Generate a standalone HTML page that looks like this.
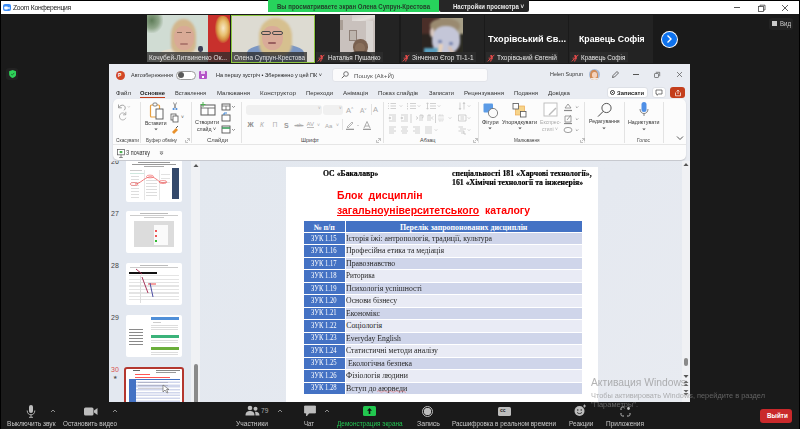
<!DOCTYPE html>
<html><head><meta charset="utf-8">
<style>
*{margin:0;padding:0;box-sizing:border-box}
html,body{width:800px;height:429px;overflow:hidden;background:#1a1a1a;font-family:"Liberation Sans",sans-serif}
.a{position:absolute}
.t{position:absolute;white-space:nowrap;line-height:1}
</style></head><body>
<!-- outer frame -->
<div class="a" style="left:0;top:0;width:800px;height:429px;background:#1a1a1a"></div>
<div class="a" style="left:0;top:0;width:800px;height:1px;background:#000"></div>
<div class="a" style="left:0;top:0;width:1px;height:429px;background:#000"></div>
<div class="a" style="left:799px;top:0;width:1px;height:429px;background:#000"></div>

<!-- title bar -->
<div class="a" style="left:1px;top:1px;width:798px;height:13px;background:#fff"></div>
<div class="a" style="left:3px;top:4px;width:7.5px;height:7px;background:#3b8cf6;border-radius:2px"></div>
<svg class="a" style="left:4px;top:5.5px" width="6" height="4" viewBox="0 0 6 4"><rect x="0.3" y="0.6" width="3.6" height="2.8" rx="0.7" fill="#fff"/><path d="M4 1.5 L5.6 0.7 V3.3 L4 2.5Z" fill="#fff"/></svg>
<div class="t" style="left:13px;top:4px;font-size:7px;letter-spacing:-0.3px;color:#222;transform:scaleX(0.968);transform-origin:0 0">Zoom Конференция</div>
<!-- window controls -->
<div class="a" style="left:733.5px;top:7px;width:6px;height:0.8px;background:#555"></div>
<svg class="a" style="left:757px;top:4px" width="9" height="9" viewBox="0 0 9 9" stroke="#444" stroke-width="0.8" fill="none"><rect x="1.5" y="2.5" width="5" height="5"/><path d="M3 2.5 V1.2 H8 V6 H6.5"/></svg>
<svg class="a" style="left:781px;top:3.5px" width="8" height="8" viewBox="0 0 8 8"><path d="M1 1 L7 7 M7 1 L1 7" stroke="#333" stroke-width="0.8"/></svg>

<!-- green banner -->
<div class="a" style="left:268px;top:0;width:171px;height:12px;background:#27d35c"></div>
<div class="t" style="left:277px;top:3.8px;font-size:6.8px;font-weight:bold;color:#23402a;transform:scaleX(0.891);transform-origin:0 0">Вы просматриваете экран Олена Супрун-Крестова</div>
<div class="a" style="left:439px;top:0;width:90px;height:12px;background:#262626;border-radius:0 0 2px 2px"></div>
<div class="t" style="left:453px;top:3.8px;font-size:6.6px;font-weight:bold;color:#e8e8e8;transform:scaleX(0.916);transform-origin:0 0">Настройки просмотра ˅</div>

<!-- view button -->
<div class="a" style="left:769px;top:18px;width:24px;height:12px;background:#222;border-radius:3px"></div>
<div class="a" style="left:772px;top:21px;width:5px;height:5px;background:#ccc"></div>
<div class="t" style="left:780px;top:21px;font-size:6.5px;color:#ccc;transform:scaleX(0.935);transform-origin:0 0">Вид</div>

<!-- shield -->
<div class="a" style="left:6px;top:68px;width:12px;height:12px;background:#222;border-radius:3px"></div>
<svg class="a" style="left:8.6px;top:70.4px" width="7.4" height="8" viewBox="0 0 8 9"><path d="M4 0 L8 1.5 V4.5 C8 7 6 8.3 4 9 C2 8.3 0 7 0 4.5 V1.5Z" fill="#2fd35a"/><path d="M2.3 4.6 L3.5 5.8 L5.8 3.2" stroke="#1a5a2a" stroke-width="0.9" fill="none"/></svg>

<!-- VIDEO TILES -->

<!-- tile 1 -->
<div class="a" style="left:146.5px;top:15px;width:83.5px;height:47px;background:#d0dcd3;overflow:hidden">
<div class="a" style="left:0;top:0;width:84px;height:47px;filter:blur(0.6px)">
  <div class="a" style="left:0;top:0;width:16px;height:18px;background:radial-gradient(ellipse at 30% 30%,#5e7c58 0,#8fa68a 45%,rgba(208,220,211,0) 75%)"></div>
  <div class="a" style="left:61px;top:0;width:23px;height:48px;background:#c8302c"></div>
  <div class="a" style="left:68px;top:1px;width:15px;height:27px;border-radius:40%;background:radial-gradient(ellipse at 55% 45%,#f7e8c8 0,#e8c070 35%,#d49040 55%,rgba(200,48,44,0) 75%)"></div>
  <div class="a" style="left:12px;top:33px;width:46px;height:16px;border-radius:45% 45% 0 0;background:#e3ddcc"></div>
  <div class="a" style="left:51px;top:31px;width:5px;height:6px;border-radius:40%;background:#3a3f55"></div>
  <div class="a" style="left:24.5px;top:4px;width:25px;height:34px;border-radius:48% 48% 25% 25%;background:#d2b68d;filter:blur(0.8px)"></div>
  <div class="a" style="left:27px;top:11px;width:20px;height:24px;border-radius:45% 45% 48% 48%;background:#d9aa96"></div>
  <div class="a" style="left:30px;top:17px;width:5px;height:1.2px;background:#8a6a5a"></div>
  <div class="a" style="left:39px;top:17px;width:5px;height:1.2px;background:#8a6a5a"></div>
  <div class="a" style="left:33px;top:28px;width:8px;height:1.5px;border-radius:1px;background:#b07a70"></div>
</div>
  <div class="a" style="left:0;top:37px;width:84px;height:10px;background:rgba(45,45,45,.78)"></div>
  <div class="t" style="left:2px;top:40px;font-size:6.4px;color:#e2e2e2;transform:scaleX(1.024);transform-origin:0 0">Кочубей-Литвиненко Ок...</div>
</div>
<!-- tile 2 -->
<div class="a" style="left:231px;top:15px;width:84px;height:48px;background:#8cc63f"></div>
<div class="a" style="left:232px;top:16px;width:82px;height:46px;background:#dddbd2;overflow:hidden">
<div class="a" style="left:0;top:0;width:82px;height:46px;filter:blur(0.6px)">
  <div class="a" style="left:15px;top:28px;width:57px;height:20px;border-radius:45% 45% 0 0;background:#7b97c4"></div>
  <div class="a" style="left:27px;top:1.5px;width:33px;height:38px;border-radius:48% 48% 30% 30%;background:#d6c08f;filter:blur(0.8px)"></div>
  <div class="a" style="left:30px;top:10px;width:21px;height:24px;border-radius:45% 45% 48% 48%;background:#d9ab98"></div>
  <div class="a" style="left:29px;top:14.5px;width:10px;height:4.5px;border:1.2px solid #4a4a4a;border-radius:2px"></div>
  <div class="a" style="left:40px;top:14.5px;width:11px;height:4.5px;border:1.2px solid #4a4a4a;border-radius:2px"></div>
  <div class="a" style="left:36px;top:26px;width:8px;height:2px;border-radius:1px;background:#9a6060"></div>
</div>
  <div class="a" style="left:0;top:36px;width:75px;height:10px;background:rgba(45,45,45,.78)"></div>
  <div class="t" style="left:2px;top:39px;font-size:6.4px;color:#e2e2e2;transform:scaleX(0.987);transform-origin:0 0">Олена Супрун-Крестова</div>
</div>
<!-- tile 3 -->
<div class="a" style="left:316px;top:15px;width:83px;height:48px;background:#232323"></div>
<div class="a" style="left:340px;top:15px;width:35px;height:47px;background:#c9c1bd;overflow:hidden;filter:blur(0.5px)">
  <div class="a" style="left:26px;top:0;width:7px;height:48px;background:#d9d5d2"></div>
  <div class="a" style="left:12px;top:0;width:23px;height:6px;background:linear-gradient(160deg,#d0cbc8 0,#e4e0dc 60%,#c9c1bd 100%)"></div>
  <div class="a" style="left:8.5px;top:15px;width:8px;height:10.5px;border:1px solid #8e8078;background:#bdb5ae"></div>
  <div class="a" style="left:0;top:5px;width:3px;height:10px;background:#a99e96"></div>
  <div class="a" style="left:12.5px;top:24px;width:15px;height:16px;border-radius:48%;background:#7a6150"></div>
  <div class="a" style="left:14.5px;top:28px;width:10px;height:10px;border-radius:48%;background:#8a705c"></div>
  <div class="a" style="left:9px;top:36px;width:23px;height:12px;border-radius:40% 40% 0 0;background:#4d3f36"></div>
</div>
<div class="a" style="left:316px;top:52.25px;width:67px;height:9.5px;background:rgba(45,45,45,.85)"></div>
<svg class="a" style="left:317px;top:53.5px" width="8" height="8" viewBox="0 0 8 8"><path d="M3.2 1.2 C4.2 0.6 5.4 1 5.6 2.2 L5.8 4.2 C5.8 5.2 5 5.8 4.2 5.7" fill="#e24a4a"/><path d="M2.2 3.5 C2 5.4 3 6.3 4.3 6.4 M4.2 6.4 L3.6 7.6" stroke="#e24a4a" stroke-width="0.9" fill="none"/><path d="M0.8 7.4 L7.4 0.8" stroke="#e24a4a" stroke-width="1"/></svg>
<div class="t" style="left:328px;top:54.5px;font-size:6.4px;color:#e6e6e6;transform:scaleX(0.990);transform-origin:0 0">Наталья Пушанко</div>
<!-- tile 4 -->
<div class="a" style="left:401px;top:15px;width:83px;height:48px;background:#232323"></div>
<div class="a" style="left:422px;top:18px;width:41px;height:34px;background:#2a2420;overflow:hidden">
  <div class="a" style="left:-4px;top:-4px;width:50px;height:42px;filter:blur(1.2px)">
  <div class="a" style="left:0;top:0;width:22px;height:20px;background:#4a2e28"></div>
  <div class="a" style="left:22px;top:0;width:28px;height:22px;background:#a8a088"></div>
  <div class="a" style="left:12px;top:4px;width:30px;height:16px;border-radius:50%;background:#9a8a70"></div>
  <div class="a" style="left:14px;top:12px;width:28px;height:28px;border-radius:45%;background:#c4c6d8"></div>
  <div class="a" style="left:12px;top:14px;width:4px;height:9px;border-radius:50%;background:#d8c8c0"></div>
  <div class="a" style="left:20px;top:26px;width:4px;height:3px;border-radius:50%;background:#6a7aa8"></div>
  <div class="a" style="left:31px;top:28px;width:4px;height:3px;border-radius:50%;background:#6a7aa8"></div>
  <div class="a" style="left:6px;top:34px;width:14px;height:8px;background:#5aa0c0"></div>
  <div class="a" style="left:20px;top:30px;width:4px;height:12px;background:#e8d0b8;transform:rotate(12deg)"></div>
  <div class="a" style="left:32px;top:32px;width:3px;height:10px;background:#d8c0b0;transform:rotate(-30deg)"></div>
  <div class="a" style="left:42px;top:20px;width:8px;height:22px;background:#2a2a22"></div>
  </div>
</div>
<div class="a" style="left:401px;top:52.25px;width:75px;height:9.5px;background:rgba(45,45,45,.85)"></div>
<svg class="a" style="left:402px;top:53.5px" width="8" height="8" viewBox="0 0 8 8"><path d="M3.2 1.2 C4.2 0.6 5.4 1 5.6 2.2 L5.8 4.2 C5.8 5.2 5 5.8 4.2 5.7" fill="#e24a4a"/><path d="M2.2 3.5 C2 5.4 3 6.3 4.3 6.4 M4.2 6.4 L3.6 7.6" stroke="#e24a4a" stroke-width="0.9" fill="none"/><path d="M0.8 7.4 L7.4 0.8" stroke="#e24a4a" stroke-width="1"/></svg>
<div class="t" style="left:412px;top:54.5px;font-size:6.4px;color:#e6e6e6;transform:scaleX(1.023);transform-origin:0 0">Зінченко Єгор ТІ-1-1</div>
<!-- tile 5 -->
<div class="a" style="left:485px;top:15px;width:83px;height:48px;background:#232323"></div>
<div class="t" style="left:488px;top:35px;font-size:9.1px;font-weight:bold;color:#fff;transform:scaleX(1.005);transform-origin:0 0">Тхорівський Єв...</div>
<div class="a" style="left:486px;top:52.25px;width:72px;height:9.5px;background:#2b2b2b"></div>
<svg class="a" style="left:487px;top:53.5px" width="8" height="8" viewBox="0 0 8 8"><path d="M3.2 1.2 C4.2 0.6 5.4 1 5.6 2.2 L5.8 4.2 C5.8 5.2 5 5.8 4.2 5.7" fill="#e24a4a"/><path d="M2.2 3.5 C2 5.4 3 6.3 4.3 6.4 M4.2 6.4 L3.6 7.6" stroke="#e24a4a" stroke-width="0.9" fill="none"/><path d="M0.8 7.4 L7.4 0.8" stroke="#e24a4a" stroke-width="1"/></svg>
<div class="t" style="left:497px;top:54.5px;font-size:6.4px;color:#e6e6e6;transform:scaleX(1.015);transform-origin:0 0">Тхорівський Євгеній</div>
<!-- tile 6 -->
<div class="a" style="left:569px;top:15px;width:84px;height:48px;background:#232323"></div>
<div class="t" style="left:579px;top:35px;font-size:8.8px;font-weight:bold;color:#fff;transform:scaleX(0.994);transform-origin:0 0">Кравець Софія</div>
<div class="a" style="left:570px;top:52.25px;width:58px;height:9.5px;background:#2b2b2b"></div>
<svg class="a" style="left:571px;top:53.5px" width="8" height="8" viewBox="0 0 8 8"><path d="M3.2 1.2 C4.2 0.6 5.4 1 5.6 2.2 L5.8 4.2 C5.8 5.2 5 5.8 4.2 5.7" fill="#e24a4a"/><path d="M2.2 3.5 C2 5.4 3 6.3 4.3 6.4 M4.2 6.4 L3.6 7.6" stroke="#e24a4a" stroke-width="0.9" fill="none"/><path d="M0.8 7.4 L7.4 0.8" stroke="#e24a4a" stroke-width="1"/></svg>
<div class="t" style="left:581px;top:54.5px;font-size:6.4px;color:#e6e6e6;transform:scaleX(0.991);transform-origin:0 0">Кравець Софія</div>
<!-- next arrow -->
<div class="a" style="left:660.5px;top:30.5px;width:17px;height:17px;border-radius:50%;background:#fff"></div>
<div class="a" style="left:661.5px;top:31.5px;width:15px;height:15px;border-radius:50%;background:#0e72ed"></div>
<svg class="a" style="left:665px;top:34px" width="8" height="10" viewBox="0 0 8 10"><path d="M2.5 1.5 L6 5 L2.5 8.5" stroke="#fff" stroke-width="1.4" fill="none"/></svg>


<!-- PPT WINDOW -->

<div class="a" style="left:109px;top:64px;width:581px;height:338px;background:#e9ecf2;overflow:hidden">
</div>
<!-- PPT title bar -->
<div class="a" style="left:116px;top:71px;width:9px;height:9px;border-radius:50%;background:#d24726"></div>
<div class="t" style="left:118px;top:73px;font-size:5px;font-weight:bold;color:#fff">P</div>
<div class="t" style="left:131px;top:72.7px;font-size:5.5px;color:#333;transform:scaleX(0.991);transform-origin:0 0">Автозбереження</div>
<div class="a" style="left:176px;top:70.5px;width:19.5px;height:9.5px;border-radius:5px;border:0.8px solid #9a9a9a;background:#fff"></div>
<div class="a" style="left:178px;top:72.2px;width:6px;height:6px;border-radius:50%;background:#5a5a5a"></div>
<div class="a" style="left:199px;top:71px;width:8px;height:8px;border-radius:1px;background:#b455c8"></div>
<div class="a" style="left:201px;top:71px;width:4px;height:3px;background:#e9c8ef"></div>
<div class="a" style="left:202px;top:76px;width:2px;height:2px;background:#fff"></div>
<div class="t" style="left:216px;top:73px;font-size:5.6px;color:#222;transform:scaleX(0.986);transform-origin:0 0">На першу зустріч • Збережено у цей ПК ˅</div>
<div class="a" style="left:332px;top:68px;width:156px;height:14px;border-radius:3px;background:#fbfbfc;border:1px solid #e2e4ea"></div>
<svg class="a" style="left:341px;top:71px" width="8" height="8" viewBox="0 0 8 8"><circle cx="5" cy="3" r="2.3" stroke="#555" stroke-width="0.8" fill="none"/><path d="M3.3 4.7 L0.8 7.2" stroke="#555" stroke-width="0.9"/></svg>
<div class="t" style="left:354px;top:72.8px;font-size:6.2px;color:#555;transform:scaleX(1.005);transform-origin:0 0">Пошук (Alt+Й)</div>
<div class="t" style="left:550px;top:72px;font-size:5.5px;color:#333;transform:scaleX(0.981);transform-origin:0 0">Helen Suprun</div>
<div class="a" style="left:588.5px;top:69px;width:11px;height:11px;border-radius:50%;background:#a9bcd8;overflow:hidden">
<div class="a" style="left:1.5px;top:0.5px;width:8px;height:11px;border-radius:45% 45% 30% 30%;background:#d08c58"></div>
<div class="a" style="left:3px;top:3px;width:5px;height:6px;border-radius:45%;background:#f4d2bc"></div>
<div class="a" style="left:1px;top:9px;width:9px;height:3px;background:#f2e8e0"></div></div>
<svg class="a" style="left:611px;top:70px" width="9" height="9" viewBox="0 0 9 9"><path d="M1.5 7.5 L2 5.5 L6 1.5 L7.5 3 L3.5 7 Z" stroke="#444" stroke-width="0.8" fill="none"/></svg>
<div class="a" style="left:633px;top:73.9px;width:5.5px;height:0.7px;background:#555"></div>
<svg class="a" style="left:653px;top:71px" width="8" height="8" viewBox="0 0 8 8" stroke="#555" stroke-width="0.7" fill="none"><rect x="1.5" y="2.5" width="4" height="4" rx="0.6"/><path d="M2.8 1.3 H6.7 V5.2"/></svg>
<svg class="a" style="left:675.5px;top:71px" width="7" height="7" viewBox="0 0 7 7"><path d="M1 1 L6 6 M6 1 L1 6" stroke="#555" stroke-width="0.7"/></svg>
<!-- tabs -->
<div class="t" style="left:116px;top:91px;font-size:5.9px;color:#333;transform:scaleX(1.036);transform-origin:0 0">Файл</div>
<div class="t" style="left:140px;top:91px;font-size:5.8px;font-weight:bold;color:#222;transform:scaleX(0.997);transform-origin:0 0">Основне</div>
<div class="a" style="left:140px;top:96.5px;width:25px;height:1.2px;background:#c43e1c"></div>
<div class="t" style="left:175px;top:91px;font-size:5.9px;color:#333;transform:scaleX(0.963);transform-origin:0 0">Вставлення</div>
<div class="t" style="left:217px;top:91px;font-size:5.9px;color:#333;transform:scaleX(1.027);transform-origin:0 0">Малювання</div>
<div class="t" style="left:260px;top:91px;font-size:5.9px;color:#333;transform:scaleX(1.072);transform-origin:0 0">Конструктор</div>
<div class="t" style="left:306px;top:91px;font-size:5.9px;color:#333;transform:scaleX(1.012);transform-origin:0 0">Переходи</div>
<div class="t" style="left:343px;top:91px;font-size:5.9px;color:#333;transform:scaleX(1.055);transform-origin:0 0">Анімація</div>
<div class="t" style="left:378px;top:91px;font-size:5.9px;color:#333;transform:scaleX(1.036);transform-origin:0 0">Показ слайдів</div>
<div class="t" style="left:429px;top:91px;font-size:5.9px;color:#333;transform:scaleX(0.984);transform-origin:0 0">Записати</div>
<div class="t" style="left:464px;top:91px;font-size:5.9px;color:#333;transform:scaleX(1.041);transform-origin:0 0">Рецензування</div>
<div class="t" style="left:514px;top:91px;font-size:5.9px;color:#333;transform:scaleX(1.009);transform-origin:0 0">Подання</div>
<div class="t" style="left:548px;top:91px;font-size:5.9px;color:#333;transform:scaleX(1.038);transform-origin:0 0">Довідка</div>
<div class="a" style="left:607px;top:87px;width:41px;height:11px;border-radius:3px;background:#fff;border:1px solid #dde0e6"></div>
<div class="a" style="left:610px;top:90px;width:5px;height:5px;border-radius:50%;border:1px solid #333;background:radial-gradient(circle,#333 40%,#fff 45%)"></div>
<div class="t" style="left:617px;top:91px;font-size:5.8px;font-weight:bold;color:#222;transform:scaleX(1.006);transform-origin:0 0">Записати</div>
<div class="a" style="left:652px;top:87px;width:14px;height:11px;border-radius:3px;background:#fff;border:1px solid #dde0e6"></div>
<svg class="a" style="left:655px;top:89px" width="8" height="7" viewBox="0 0 8 7"><path d="M1 1 H7 V5 H3.5 L2 6.3 V5 H1 Z" stroke="#444" stroke-width="0.7" fill="none"/></svg>
<div class="a" style="left:670px;top:87px;width:15px;height:11px;border-radius:3px;background:#c43e1c"></div>
<svg class="a" style="left:673.5px;top:88.5px" width="8" height="8" viewBox="0 0 8 8" stroke="#fff" stroke-width="0.7" fill="none"><path d="M1.5 3.5 V6.8 H6.5 V3.5"/><path d="M4 5 V1.2 M2.6 2.5 L4 1.1 L5.4 2.5"/></svg>

<!-- ribbon -->
<div class="a" style="left:113px;top:99px;width:573px;height:61px;border-radius:5px;background:#fcfcfc;box-shadow:0 1px 1.5px rgba(0,0,0,.18)"></div>
<div class="a" style="left:113px;top:144px;width:573px;height:1px;background:#e6e6e6"></div>

<!-- separators -->
<div class="a" style="left:140px;top:102px;width:1px;height:41px;background:#e3e3e3"></div>
<div class="a" style="left:191px;top:102px;width:1px;height:41px;background:#e3e3e3"></div>
<div class="a" style="left:241px;top:102px;width:1px;height:41px;background:#e3e3e3"></div>
<div class="a" style="left:383px;top:102px;width:1px;height:41px;background:#e3e3e3"></div>
<div class="a" style="left:478px;top:102px;width:1px;height:41px;background:#e3e3e3"></div>
<div class="a" style="left:584px;top:102px;width:1px;height:41px;background:#e3e3e3"></div>
<div class="a" style="left:624px;top:102px;width:1px;height:41px;background:#e3e3e3"></div>
<div class="a" style="left:663px;top:102px;width:1px;height:41px;background:#e3e3e3"></div>
<!-- group labels -->
<div class="t" style="left:116px;top:138px;font-size:5.5px;color:#444;transform:scaleX(0.869);transform-origin:0 0">Скасувати</div>
<div class="t" style="left:146px;top:138px;font-size:5.5px;color:#444;transform:scaleX(0.880);transform-origin:0 0">Буфер обміну</div>
<div class="t" style="left:207px;top:138px;font-size:5.5px;color:#444;transform:scaleX(1.072);transform-origin:0 0">Слайди</div>
<div class="t" style="left:301px;top:138px;font-size:5.5px;color:#444">Шрифт</div>
<div class="t" style="left:420px;top:138px;font-size:5.5px;color:#444">Абзац</div>
<div class="t" style="left:514px;top:138px;font-size:5.5px;color:#444;transform:scaleX(0.850);transform-origin:0 0">Малювання</div>
<div class="t" style="left:637px;top:138px;font-size:5.5px;color:#444;transform:scaleX(0.888);transform-origin:0 0">Голос</div>
<!-- launchers -->
<svg class="a" style="left:185px;top:137.5px" width="5" height="5" viewBox="0 0 5 5" stroke="#999" stroke-width="0.6" fill="none"><path d="M0.5 2 V4.5 H3 M2 0.5 H4.5 V3 M1.8 3.2 L4.2 0.8"/></svg>
<svg class="a" style="left:376px;top:137.5px" width="5" height="5" viewBox="0 0 5 5" stroke="#999" stroke-width="0.6" fill="none"><path d="M0.5 2 V4.5 H3 M2 0.5 H4.5 V3 M1.8 3.2 L4.2 0.8"/></svg>
<svg class="a" style="left:473px;top:137.5px" width="5" height="5" viewBox="0 0 5 5" stroke="#999" stroke-width="0.6" fill="none"><path d="M0.5 2 V4.5 H3 M2 0.5 H4.5 V3 M1.8 3.2 L4.2 0.8"/></svg>
<svg class="a" style="left:580px;top:137.5px" width="5" height="5" viewBox="0 0 5 5" stroke="#999" stroke-width="0.6" fill="none"><path d="M0.5 2 V4.5 H3 M2 0.5 H4.5 V3 M1.8 3.2 L4.2 0.8"/></svg>
<!-- undo/redo -->
<svg class="a" style="left:116px;top:102px" width="16" height="20" viewBox="0 0 16 20" fill="none" stroke="#8a8a8a" stroke-width="0.8"><path d="M2.5 2.5 V5.8 H5.8"/><path d="M2.7 5.6 C4 3.4 6 2.8 7.6 3.4 C9.6 4.2 9.8 7.2 7.8 8.4"/><path d="M11.8 4.3 L12.8 5.3 L13.8 4.3" stroke="#aaa" stroke-width="0.6"/><path d="M9.6 12.6 C8.8 11 7 10.6 5.4 11.2 C3.4 12 2.8 15 4.2 16.8 C5.8 18.6 9 18.2 9.8 15.8" stroke="#a0a0a0"/><path d="M9.8 9.8 V12.8 H7" stroke="#a0a0a0"/></svg>
<!-- paste -->
<svg class="a" style="left:149px;top:101.5px" width="16" height="18" viewBox="0 0 16 18"><rect x="1.5" y="3" width="9" height="12" rx="1" fill="#fff" stroke="#e8a040" stroke-width="1.2"/><rect x="4" y="1" width="4" height="3" rx="1" fill="#fff" stroke="#666" stroke-width="0.8"/><rect x="7" y="7" width="7" height="10" fill="#fff" stroke="#555" stroke-width="0.9"/></svg>
<div class="t" style="left:145px;top:121px;font-size:5.8px;color:#333;transform:scaleX(0.871);transform-origin:0 0">Вставити</div>
<svg class="a" style="left:154px;top:127.8px" width="4" height="3" viewBox="0 0 4 3"><path d="M0.3 0.5 L2 2.3 L3.7 0.5Z" fill="#555"/></svg>
<svg class="a" style="left:170px;top:101px" width="10" height="34" viewBox="0 0 10 34"><path d="M3.5 1.5 L5.8 7 M6.5 1.5 L4.2 7" stroke="#666" stroke-width="0.7"/><circle cx="3.6" cy="8" r="1.1" fill="#4a8ad8"/><circle cx="6.4" cy="8" r="1.1" fill="#4a8ad8"/><rect x="1" y="13" width="5" height="6" fill="none" stroke="#555" stroke-width="0.8"/><rect x="3" y="15" width="5" height="6" fill="#fff" stroke="#555" stroke-width="0.8"/><path d="M2 31 L6 27 L8 29 L4 33 Z" fill="#e8912c"/><path d="M6 27 L8 25" stroke="#555" stroke-width="1"/></svg>
<div class="t" style="left:181px;top:115px;font-size:5px;color:#555">˅</div>
<!-- new slide -->
<svg class="a" style="left:199px;top:102px" width="18" height="14" viewBox="0 0 18 14"><rect x="2" y="3" width="14" height="10" fill="#fff" stroke="#666" stroke-width="1.1"/><path d="M2 6 H16 M9 6 V13" stroke="#666" stroke-width="0.9"/><path d="M4 0 V5 M1.5 2.5 H6.5" stroke="#4caf50" stroke-width="1"/></svg>
<div class="t" style="left:195px;top:120px;font-size:5.8px;color:#333;transform:scaleX(0.943);transform-origin:0 0">Створити</div>
<div class="t" style="left:197px;top:126.5px;font-size:5.8px;color:#333;transform:scaleX(0.899);transform-origin:0 0">слайд ˅</div>
<svg class="a" style="left:221px;top:102px" width="16" height="34" viewBox="0 0 16 34"><rect x="1" y="2" width="8" height="6" fill="#fff" stroke="#555" stroke-width="0.9"/><path d="M1 4 H9 M5 4 V8" stroke="#555" stroke-width="0.7"/><path d="M11 4 L12.5 5.5 L14 4" stroke="#555" stroke-width="0.6" fill="none"/><rect x="1" y="13" width="8" height="6" fill="#fff" stroke="#555" stroke-width="0.9"/><path d="M3 13 V11 H6" stroke="#2b7cd3" stroke-width="0.9" fill="none"/><rect x="1" y="24" width="8" height="7" fill="#fff" stroke="#555" stroke-width="0.9"/><path d="M1 26 H9" stroke="#3a9d5a" stroke-width="1.6"/><path d="M11 27 L12.5 28.5 L14 27" stroke="#555" stroke-width="0.6" fill="none"/></svg>
<!-- font group -->
<div class="a" style="left:246px;top:105px;width:76px;height:10px;border-radius:3px;background:#f0f0f0"></div>
<div class="t" style="left:318px;top:107px;font-size:4.5px;color:#aaa">˅</div>
<div class="a" style="left:323px;top:105px;width:20px;height:10px;border-radius:3px;background:#f0f0f0"></div>
<div class="t" style="left:339px;top:107px;font-size:4.5px;color:#aaa">˅</div>
<div class="t" style="left:346px;top:106px;font-size:7.5px;color:#aaa">A<sup style="font-size:4px">˄</sup></div>
<div class="t" style="left:360px;top:107px;font-size:6.5px;color:#aaa">A<sup style="font-size:4px">˅</sup></div>
<div class="a" style="left:371px;top:104px;width:1px;height:11px;background:#e3e3e3"></div>
<div class="t" style="left:373px;top:106px;font-size:7.5px;color:#aaa">A</div>
<div class="t" style="left:247.5px;top:121.5px;font-size:6.8px;font-weight:bold;color:#8a8a8a">Ж</div>
<div class="t" style="left:260px;top:122px;font-size:6.5px;font-style:italic;color:#aaa">К</div>
<div class="t" style="left:272.5px;top:121.5px;font-size:6.8px;color:#b0b0b0">П</div>
<div class="t" style="left:284px;top:121.5px;font-size:7px;font-weight:bold;color:#999">S</div>
<div class="t" style="left:294.5px;top:122.8px;font-size:5px;color:#aaa;text-decoration:line-through">‹ab›</div>
<div class="t" style="left:306.5px;top:120.5px;font-size:6px;color:#aaa">AV</div>
<div class="a" style="left:306.5px;top:127px;width:7px;height:0.6px;background:#bbb"></div>
<div class="t" style="left:317px;top:123px;font-size:5px;color:#aaa">˅</div>
<div class="t" style="left:325px;top:123px;font-size:6px;color:#aaa">Aa</div>
<div class="t" style="left:336px;top:123px;font-size:5px;color:#aaa">˅</div>
<div class="a" style="left:342px;top:119px;width:1px;height:11px;background:#e3e3e3"></div>
<svg class="a" style="left:345px;top:120px" width="30" height="10" viewBox="0 0 30 10"><path d="M2 7 L7 2 L8 3 L3 8 Z" fill="none" stroke="#999" stroke-width="0.7"/><path d="M1 9.3 H9" stroke="#888" stroke-width="1.1"/><path d="M12 5 L13 6 L14 5" stroke="#aaa" stroke-width="0.5" fill="none"/><path d="M19 8 L22 1.5 L25 8 M20 6 H24" stroke="#999" stroke-width="0.8" fill="none"/><path d="M18 9.3 H26" stroke="#888" stroke-width="1.1"/></svg>
<!-- paragraph group -->
<svg class="a" style="left:386px;top:102px" width="92" height="36" viewBox="0 0 92 36" stroke="#b4b4b4" stroke-width="0.6" fill="none"><path d="M4.5 1.5 H10 M4.5 4 H10 M4.5 6.5 H10 M2 1.5 H3 M2 4 H3 M2 6.5 H3"/><path d="M13.8 3.4 L15 4.6 L16.2 3.4"/><path d="M24 1.5 H30 M24 4 H30 M24 6.5 H30 M21.5 1 V2.5 M21.5 3.5 V5 M21.5 6 V7.5"/><path d="M31.8 3.4 L33 4.6 L34.2 3.4"/><path d="M44 1.5 H50 M44 4 H50 M44 6.5 H50 M41.5 0.8 V7.2 M40.5 1.8 L41.5 0.8 L42.5 1.8 M40.5 6.2 L41.5 7.2 L42.5 6.2"/><path d="M51.8 3.4 L53 4.6 L54.2 3.4"/><path d="M74 0.5 V7.5 M78 0.5 V7.5 M73 6 L74 7.5 L75 6 M77 2 L78 0.5 L79 2"/><path d="M81.8 3.4 L83 4.6 L84.2 3.4"/><path d="M3 13 H10 M6 15 H10 M6 17 H10 M3 19 H10 M5 16 L3.3 15 V17 Z"/><path d="M15 13 H22 M18 15 H22 M18 17 H22 M15 19 H22 M15.3 15 L17 16 L15.3 17Z"/><path d="M25 12 V21"/><path d="M30 14.5 L32 16 L30 17.5 M34 13 V19 M36 13 V19 M34 13 H36.5 C37.5 13 37.5 16 36 16"/><path d="M42 13 V19 M44 13 V19 M42 13 H44.5 M47 14.5 L45.5 16 L47 17.5"/><path d="M49.5 12 V21"/><path d="M53 13 V19 M57 13 V19 M53 13 H57 M53 19 H57 M55 13 V19" stroke-dasharray="0.8 0.6"/><path d="M62.8 15.4 L64 16.6 L65.2 15.4"/><path d="M72.5 13 H80 V19 H72.5 Z M74.5 15 H78 M74.5 17 H78"/><path d="M81.8 15.4 L83 16.6 L84.2 15.4"/><path d="M3 25 H10 M3 27 H8 M3 29 H10 M3 31 H8"/><path d="M15 25 H22 M16 27 H21 M15 29 H22 M16 31 H21"/><path d="M27 25 H34 M29 27 H34 M27 29 H34 M29 31 H34"/><path d="M39 25 H46 M39 27 H46 M39 29 H46 M39 31 H46"/><path d="M48.8 27.4 L50 28.6 L51.2 27.4"/><path d="M72.5 25 H77 M74 27 H80 M72.5 29 H78 V32 H80 M75 31 H78"/><path d="M81.8 27.4 L83 28.6 L84.2 27.4"/></svg>
<!-- drawing group -->
<svg class="a" style="left:483px;top:102.5px" width="18" height="16" viewBox="0 0 18 16"><rect x="0.5" y="0.5" width="9.5" height="9" rx="1" fill="#5b9be6"/><circle cx="10" cy="10" r="4.6" fill="#fafafa" stroke="#666" stroke-width="0.8"/></svg>
<div class="t" style="left:482px;top:120px;font-size:5.8px;color:#333;transform:scaleX(0.976);transform-origin:0 0">Фігури</div>
<svg class="a" style="left:488px;top:127.3px" width="4" height="3" viewBox="0 0 4 3"><path d="M0.3 0.5 L2 2.3 L3.7 0.5Z" fill="#555"/></svg>
<svg class="a" style="left:512px;top:102.5px" width="16" height="16" viewBox="0 0 16 16"><rect x="3.5" y="3" width="9" height="9" fill="#f6d48a" stroke="#eda850" stroke-width="0.7"/><rect x="1" y="0.5" width="5.5" height="5.5" fill="#fff" stroke="#555" stroke-width="0.8"/><rect x="8.5" y="8.5" width="5.5" height="5.5" fill="#fff" stroke="#555" stroke-width="0.8"/></svg>
<div class="t" style="left:502px;top:120px;font-size:5.8px;color:#333;transform:scaleX(0.946);transform-origin:0 0">Упорядкувати</div>
<svg class="a" style="left:517.5px;top:127.3px" width="4" height="3" viewBox="0 0 4 3"><path d="M0.3 0.5 L2 2.3 L3.7 0.5Z" fill="#555"/></svg>
<svg class="a" style="left:543px;top:102px" width="16" height="16" viewBox="0 0 16 16"><rect x="1" y="1" width="13" height="13" fill="#fff" stroke="#bbb" stroke-width="0.9"/><path d="M6 13 L13 6" stroke="#bbb" stroke-width="1.4"/></svg>
<div class="t" style="left:540px;top:120px;font-size:5.8px;color:#aaa;transform:scaleX(0.882);transform-origin:0 0">Експрес-</div>
<div class="t" style="left:542px;top:126.5px;font-size:5.8px;color:#aaa;transform:scaleX(0.866);transform-origin:0 0">стилі ˅</div>
<svg class="a" style="left:563px;top:102px" width="18" height="34" viewBox="0 0 18 34" stroke="#888" stroke-width="0.8" fill="none"><path d="M2 6 L5 2 L8 6 Z"/><path d="M1 8.5 H9" stroke-width="1.2"/><path d="M2 14 H8 V20 H2 Z M4 18 L8 13"/><path d="M1 21.5 H9" stroke-width="1.2"/><ellipse cx="5" cy="28" rx="4" ry="2.6"/><path d="M12.8 4.5 L14 5.7 L15.2 4.5 M12.8 16.5 L14 17.7 L15.2 16.5 M12.8 27.5 L14 28.7 L15.2 27.5"/></svg>
<!-- editing -->
<svg class="a" style="left:597px;top:102px" width="16" height="16" viewBox="0 0 16 16"><circle cx="9.5" cy="6" r="4.6" fill="none" stroke="#444" stroke-width="0.9"/><path d="M6.3 9.3 L1 14.6" stroke="#444" stroke-width="1"/></svg>
<div class="t" style="left:589px;top:119px;font-size:5.8px;color:#333;transform:scaleX(0.897);transform-origin:0 0">Редагування</div>
<svg class="a" style="left:602px;top:126.8px" width="4" height="3" viewBox="0 0 4 3"><path d="M0.3 0.5 L2 2.3 L3.7 0.5Z" fill="#555"/></svg>
<!-- voice -->
<svg class="a" style="left:638px;top:101px" width="12" height="16" viewBox="0 0 12 16"><rect x="3.5" y="1" width="5" height="10" rx="2.5" fill="#4f8fe6"/><path d="M2 8 C2 11 4 12.5 6 12.5 C8 12.5 10 11 10 8 M6 12.5 V15" stroke="#666" stroke-width="0.8" fill="none"/></svg>
<div class="t" style="left:628px;top:120px;font-size:5.8px;color:#333;transform:scaleX(0.916);transform-origin:0 0">Надиктувати</div>
<svg class="a" style="left:641.5px;top:127.8px" width="4" height="3" viewBox="0 0 4 3"><path d="M0.3 0.5 L2 2.3 L3.7 0.5Z" fill="#555"/></svg>
<svg class="a" style="left:676px;top:135px" width="8" height="6" viewBox="0 0 8 6"><path d="M1 1.5 L4 4.5 L7 1.5" stroke="#444" stroke-width="0.9" fill="none"/></svg>
<!-- quick access bar -->
<svg class="a" style="left:116.5px;top:148.5px" width="8" height="9" viewBox="0 0 9 10"><rect x="0.5" y="0.5" width="8" height="6" fill="#fff" stroke="#555" stroke-width="0.8"/><rect x="3" y="2.2" width="3" height="2.4" fill="#4caf50"/><path d="M4.5 6.5 V9 M2.5 9.5 H6.5" stroke="#555" stroke-width="0.8"/></svg>
<div class="t" style="left:126px;top:150px;font-size:6.3px;color:#333;transform:scaleX(0.862);transform-origin:0 0">З початку</div>
<svg class="a" style="left:159px;top:150.5px" width="5" height="5" viewBox="0 0 5 5"><path d="M0.8 0.8 H4.2" stroke="#555" stroke-width="0.6"/><path d="M1 2 L2.5 3.8 L4 2 Z" fill="none" stroke="#555" stroke-width="0.6"/></svg>


<!-- pane backgrounds -->
<div class="a" style="left:109px;top:161px;width:82px;height:241px;background:#e3e8f0"></div>
<div class="a" style="left:191px;top:161px;width:9px;height:241px;background:#f0f1f4"></div>
<div class="a" style="left:200px;top:161px;width:482px;height:241px;background:linear-gradient(135deg,#e3e8ef 0,#e5e9f0 60%,#e8ebf1 100%)"></div>
<div class="a" style="left:682px;top:161px;width:8px;height:241px;background:#f0f1f4"></div>

<div class="a" style="left:109px;top:161px;width:82px;height:241px;overflow:hidden">
  <!-- 26 -->
  <div class="a" style="left:17px;top:-1px;width:56px;height:42px;background:#fff;border-radius:2px;overflow:hidden">
    <div class="a" style="left:12px;top:2px;width:32px;height:0.8px;background:#999"></div>
    <div class="a" style="left:6px;top:4px;width:44px;height:0.8px;background:#999"></div>
    <div class="a" style="left:18px;top:6px;width:20px;height:0.8px;background:#aaa"></div>
    <div class="a" style="left:4px;top:10px;width:12px;height:0.7px;background:#ccc"></div>
    <div class="a" style="left:4px;top:13px;width:14px;height:1.2px;background:#cfe8df"></div>
    <div class="a" style="left:5px;top:16px;width:8px;height:22px;background:repeating-linear-gradient(#ddd 0 0.7px,#fff 0.7px 3px)"></div>
    <div class="a" style="left:18px;top:10px;width:0.7px;height:30px;background:#e6e6e6"></div>
    <div class="a" style="left:33px;top:10px;width:0.7px;height:30px;background:#e6e6e6"></div>
    <div class="a" style="left:20px;top:20px;width:11px;height:18px;background:repeating-linear-gradient(#ddd 0 0.7px,#fff 0.7px 3px)"></div>
    <div class="a" style="left:35px;top:14px;width:9px;height:12px;background:repeating-linear-gradient(#e2e2e2 0 0.7px,#fff 0.7px 4px)"></div>
    <div class="a" style="left:46px;top:8px;width:7px;height:31px;background:#34496b"></div>
    <svg class="a" style="left:0;top:0" width="56" height="42"><path d="M9 24 C14 24 18 18 23 17 C27 16 30 19 34 22 C36 23 38 23 40 22" stroke="#ee5a5a" stroke-width="0.8" fill="none"/><ellipse cx="8" cy="24" rx="4" ry="1.5" stroke="#ee5a5a" stroke-width="0.6" fill="none"/><ellipse cx="24" cy="16.5" rx="3.5" ry="1.4" stroke="#ee5a5a" stroke-width="0.6" fill="none"/><ellipse cx="37" cy="22" rx="4" ry="1.5" stroke="#ee5a5a" stroke-width="0.6" fill="none"/></svg>
  </div>
  <div class="t" style="left:2px;top:-3px;font-size:7px;color:#444">26</div>
  <!-- 27 -->
  <div class="t" style="left:2px;top:49px;font-size:7px;color:#444">27</div>
  <div class="a" style="left:17px;top:50px;width:56px;height:42px;background:#fff;border-radius:2px;overflow:hidden">
    <div class="a" style="left:14px;top:2px;width:28px;height:1px;background:#bbb"></div>
    <div class="a" style="left:4px;top:4px;width:48px;height:1px;background:#ccc"></div>
    <div class="a" style="left:18px;top:6px;width:20px;height:1px;background:#ccc"></div>
    <div class="a" style="left:8px;top:10px;width:40px;height:26px;background:#dcdcdc"></div>
    <div class="a" style="left:28px;top:14px;width:14px;height:20px;background:#fafafa"></div>
    <div class="a" style="left:29px;top:19px;width:2px;height:2px;background:#e55"></div>
    <div class="a" style="left:29px;top:24px;width:2px;height:2px;background:#e55"></div>
    <div class="a" style="left:29px;top:29px;width:2px;height:2px;background:#3b3"></div>
  </div>
  <div class="t" style="left:2px;top:101px;font-size:7px;color:#444">28</div>
  <!-- 28 -->
  <div class="a" style="left:17px;top:102px;width:56px;height:42px;background:#fff;border-radius:2px;overflow:hidden">
    <div class="a" style="left:14px;top:2px;width:28px;height:1px;background:#bbb"></div>
    <div class="a" style="left:4px;top:4px;width:48px;height:1px;background:#ccc"></div>
    <div class="a" style="left:3px;top:9px;width:28px;height:2px;background:#111"></div>
    <div class="a" style="left:3px;top:12px;width:50px;height:28px;background:repeating-linear-gradient(#e4e4e4 0 1px,#fff 1px 3.5px)"></div>
    <div class="a" style="left:14px;top:12px;width:1px;height:28px;background:#ddd"></div>
    <div class="a" style="left:22px;top:20px;width:8px;height:2px;background:#f6a0a0"></div>
    <svg class="a" style="left:0;top:0" width="56" height="42"><path d="M10 6 L16 11 M16 14 L22 30" stroke="#a0204a" stroke-width="0.9"/><path d="M24 20 L27 34" stroke="#3a3a9a" stroke-width="0.9"/></svg>
  </div>
  <div class="t" style="left:2px;top:153px;font-size:7px;color:#444">29</div>
  <!-- 29 -->
  <div class="a" style="left:17px;top:154px;width:56px;height:42px;background:#fff;border-radius:2px;overflow:hidden">
    <div class="a" style="left:25px;top:2px;width:28px;height:3px;background:#4f8fd8"></div>
    <div class="a" style="left:27px;top:7px;width:8px;height:1px;background:#ccc"></div>
    <div class="a" style="left:25px;top:10px;width:27px;height:6px;background:repeating-linear-gradient(#ddd 0 1px,#fff 1px 2px)"></div>
    <div class="a" style="left:3px;top:14px;width:14px;height:17px;background:repeating-linear-gradient(#8a8a8a 0 0.8px,#fff 0.8px 3px)"></div>
    <div class="a" style="left:25px;top:20px;width:28px;height:3px;background:#3bb37a"></div>
    <div class="a" style="left:25px;top:25px;width:27px;height:4px;background:repeating-linear-gradient(#ddd 0 1px,#fff 1px 2px)"></div>
    <div class="a" style="left:25px;top:32px;width:28px;height:3px;background:#6aae3a"></div>
    <div class="a" style="left:25px;top:37px;width:27px;height:3px;background:repeating-linear-gradient(#ddd 0 1px,#fff 1px 2px)"></div>
  </div>
  <div class="t" style="left:2px;top:205px;font-size:7px;color:#d9534f">30</div>
  <div class="t" style="left:4px;top:214px;font-size:5px;color:#555">★</div>
  <!-- 30 -->
  <div class="a" style="left:15px;top:206px;width:60px;height:45px;border:2px solid #b4372f;border-radius:3px;background:#fff;overflow:hidden">
    <div class="a" style="left:7px;top:0.5px;width:7px;height:1px;background:#666"></div>
    <div class="a" style="left:30px;top:0.5px;width:24px;height:1px;background:#888"></div>
    <div class="a" style="left:30px;top:2.5px;width:20px;height:1px;background:#999"></div>
    <div class="a" style="left:9px;top:4.5px;width:15px;height:1.2px;background:#f55"></div>
    <div class="a" style="left:9px;top:7.5px;width:35px;height:1.2px;background:#f55"></div>
    <div class="a" style="left:3px;top:9.5px;width:51px;height:40px;background:repeating-linear-gradient(#d0d6ec 0 1.3px,#fff 1.3px 1.6px,#e9ebf6 1.6px 2.9px,#fff 2.9px 3.2px)"></div>
    <div class="a" style="left:3px;top:9.5px;width:51px;height:1.6px;background:#4472c4"></div>
    <div class="a" style="left:3px;top:9.5px;width:7px;height:40px;background:#4472c4"></div>
    <div class="a" style="left:12px;top:12px;width:30px;height:20px;background:repeating-linear-gradient(transparent 0 1px,rgba(120,120,140,.35) 1px 1.5px,transparent 1.5px 3.2px)"></div>
    <svg class="a" style="left:36px;top:15px" width="8" height="10"><path d="M1 1 L1 8 L3 6 L5 9 L6 8.5 L4.5 5.5 L7 5.5 Z" fill="#fff" stroke="#555" stroke-width="0.6"/></svg>
  </div>
</div>
<!-- left scrollbar -->
<svg class="a" style="left:193px;top:163px" width="6" height="5"><path d="M0.5 4 L3 1 L5.5 4 Z" fill="#555"/></svg>
<div class="a" style="left:194px;top:364px;width:4px;height:40px;border-radius:2px;background:#8a8a8a"></div>
<!-- right scrollbar -->
<svg class="a" style="left:683px;top:162px" width="6" height="5"><path d="M0.5 4 L3 1 L5.5 4 Z" fill="#555"/></svg>
<div class="a" style="left:684px;top:358px;width:4px;height:8px;border-radius:2px;background:#8a8a8a"></div>
<svg class="a" style="left:683px;top:374px" width="6" height="22"><path d="M0.5 1 L3 4 L5.5 1 Z" fill="#555"/><path d="M0.5 9 L3 6.5 L5.5 9 Z M0.5 12 L3 9.5 L5.5 12 Z" fill="#666"/><path d="M0.5 16 L3 18.5 L5.5 16 Z M0.5 19 L3 21.5 L5.5 19 Z" fill="#666"/></svg>


<div class="a" style="left:286px;top:167px;width:312px;height:235px;background:#fff;overflow:hidden">
  <div class="t" style="left:36.8px;top:3px;font-family:'Liberation Serif',serif;font-weight:bold;font-size:7.6px;color:#000;-webkit-text-stroke:0.2px #000;transform:scaleX(1.020);transform-origin:0 0">ОС «Бакалавр»</div>
  <div class="t" style="left:166px;top:3px;font-family:'Liberation Serif',serif;font-weight:bold;font-size:7.6px;color:#000;-webkit-text-stroke:0.2px #000;transform:scaleX(1.029);transform-origin:0 0">спеціальності 181 «Харчові технології»,</div>
  <div class="t" style="left:166px;top:11.5px;font-family:'Liberation Serif',serif;font-weight:bold;font-size:7.6px;color:#000;-webkit-text-stroke:0.2px #000;transform:scaleX(1.026);transform-origin:0 0">161 «Хімічні технології та інженерія»</div>
  <div class="t" style="left:51px;top:23px;font-weight:bold;font-size:10.7px;color:#f00;transform:scaleX(0.981);transform-origin:0 0">Блок&nbsp; дисциплін</div>
  <div class="t" style="left:51px;top:37.7px;font-weight:bold;font-size:10.7px;color:#f00;transform:scaleX(0.976);transform-origin:0 0"><span style="text-decoration:underline;text-decoration-thickness:0.6px;text-underline-offset:1.2px">загальноуніверситетського</span>&nbsp; каталогу</div>
  <div class="a" style="left:17.7px;top:54px;width:278.3px;height:173.3px;background:#fff"><div class="a" style="left:0;top:0;width:41px;height:11px;background:#4472c4"></div><div class="a" style="left:42px;top:0;width:236.3px;height:11px;background:#4472c4"></div><div class="t" style="left:0;top:2.6px;width:41px;text-align:center;font-family:'Liberation Serif',serif;font-weight:bold;font-size:7.9px;color:#fff">№ п/п</div><div class="t" style="left:42px;top:2.6px;width:236px;text-align:center;font-family:'Liberation Serif',serif;font-weight:bold;font-size:7.9px;color:#fff">Перелік запропонованих дисциплін</div><div class="a" style="left:0;top:12.00px;width:41px;height:11.4px;background:#4472c4"></div><div class="a" style="left:42px;top:12.00px;width:236.3px;height:11.4px;background:#cfd5ea"></div><div class="t" style="left:7.8px;top:13.60px;font-family:'Liberation Serif',serif;font-size:7.4px;color:#fff;transform:scaleX(0.9);transform-origin:0 0">ЗУК 1.15</div><div class="t" style="left:42.5px;top:14.00px;font-family:'Liberation Serif',serif;font-size:7.8px;color:#262626;transform:scaleX(0.996);transform-origin:0 0">Історія їжі: антропологія, традиції, культура</div><div class="a" style="left:0;top:24.48px;width:41px;height:11.4px;background:#4472c4"></div><div class="a" style="left:42px;top:24.48px;width:236.3px;height:11.4px;background:#e9ebf5"></div><div class="t" style="left:7.8px;top:26.08px;font-family:'Liberation Serif',serif;font-size:7.4px;color:#fff;transform:scaleX(0.9);transform-origin:0 0">ЗУК 1.16</div><div class="t" style="left:42.5px;top:26.48px;font-family:'Liberation Serif',serif;font-size:7.8px;color:#262626;transform:scaleX(0.996);transform-origin:0 0">Професійна етика та медіація</div><div class="a" style="left:0;top:36.96px;width:41px;height:11.4px;background:#4472c4"></div><div class="a" style="left:42px;top:36.96px;width:236.3px;height:11.4px;background:#cfd5ea"></div><div class="t" style="left:7.8px;top:38.56px;font-family:'Liberation Serif',serif;font-size:7.4px;color:#fff;transform:scaleX(0.9);transform-origin:0 0">ЗУК 1.17</div><div class="t" style="left:42.5px;top:38.96px;font-family:'Liberation Serif',serif;font-size:7.8px;color:#262626;transform:scaleX(0.999);transform-origin:0 0">Правознавство</div><div class="a" style="left:0;top:49.44px;width:41px;height:11.4px;background:#4472c4"></div><div class="a" style="left:42px;top:49.44px;width:236.3px;height:11.4px;background:#e9ebf5"></div><div class="t" style="left:7.8px;top:51.04px;font-family:'Liberation Serif',serif;font-size:7.4px;color:#fff;transform:scaleX(0.9);transform-origin:0 0">ЗУК 1.18</div><div class="t" style="left:42.5px;top:51.44px;font-family:'Liberation Serif',serif;font-size:7.8px;color:#262626;transform:scaleX(0.931);transform-origin:0 0">Риторика</div><div class="a" style="left:0;top:61.92px;width:41px;height:11.4px;background:#4472c4"></div><div class="a" style="left:42px;top:61.92px;width:236.3px;height:11.4px;background:#cfd5ea"></div><div class="t" style="left:7.8px;top:63.52px;font-family:'Liberation Serif',serif;font-size:7.4px;color:#fff;transform:scaleX(0.9);transform-origin:0 0">ЗУК 1.19</div><div class="t" style="left:42.5px;top:63.92px;font-family:'Liberation Serif',serif;font-size:7.8px;color:#262626;transform:scaleX(0.995);transform-origin:0 0">Психологія успішності</div><div class="a" style="left:0;top:74.40px;width:41px;height:11.4px;background:#4472c4"></div><div class="a" style="left:42px;top:74.40px;width:236.3px;height:11.4px;background:#e9ebf5"></div><div class="t" style="left:7.8px;top:76.00px;font-family:'Liberation Serif',serif;font-size:7.4px;color:#fff;transform:scaleX(0.9);transform-origin:0 0">ЗУК 1.20</div><div class="t" style="left:42.5px;top:76.40px;font-family:'Liberation Serif',serif;font-size:7.8px;color:#262626;transform:scaleX(0.999);transform-origin:0 0">Основи бізнесу</div><div class="a" style="left:0;top:86.88px;width:41px;height:11.4px;background:#4472c4"></div><div class="a" style="left:42px;top:86.88px;width:236.3px;height:11.4px;background:#cfd5ea"></div><div class="t" style="left:7.8px;top:88.48px;font-family:'Liberation Serif',serif;font-size:7.4px;color:#fff;transform:scaleX(0.9);transform-origin:0 0">ЗУК 1.21</div><div class="t" style="left:42.5px;top:88.88px;font-family:'Liberation Serif',serif;font-size:7.8px;color:#262626;transform:scaleX(0.996);transform-origin:0 0">Економікс</div><div class="a" style="left:0;top:99.36px;width:41px;height:11.4px;background:#4472c4"></div><div class="a" style="left:42px;top:99.36px;width:236.3px;height:11.4px;background:#e9ebf5"></div><div class="t" style="left:7.8px;top:100.96px;font-family:'Liberation Serif',serif;font-size:7.4px;color:#fff;transform:scaleX(0.9);transform-origin:0 0">ЗУК 1.22</div><div class="t" style="left:42.5px;top:101.36px;font-family:'Liberation Serif',serif;font-size:7.8px;color:#262626;transform:scaleX(1.000);transform-origin:0 0">Соціологія</div><div class="a" style="left:0;top:111.84px;width:41px;height:11.4px;background:#4472c4"></div><div class="a" style="left:42px;top:111.84px;width:236.3px;height:11.4px;background:#cfd5ea"></div><div class="t" style="left:7.8px;top:113.44px;font-family:'Liberation Serif',serif;font-size:7.4px;color:#fff;transform:scaleX(0.9);transform-origin:0 0">ЗУК 1.23</div><div class="t" style="left:42.5px;top:113.84px;font-family:'Liberation Serif',serif;font-size:7.8px;color:#262626;transform:scaleX(0.985);transform-origin:0 0">Everyday English</div><div class="a" style="left:0;top:124.32px;width:41px;height:11.4px;background:#4472c4"></div><div class="a" style="left:42px;top:124.32px;width:236.3px;height:11.4px;background:#e9ebf5"></div><div class="t" style="left:7.8px;top:125.92px;font-family:'Liberation Serif',serif;font-size:7.4px;color:#fff;transform:scaleX(0.9);transform-origin:0 0">ЗУК 1.24</div><div class="t" style="left:42.5px;top:126.32px;font-family:'Liberation Serif',serif;font-size:7.8px;color:#262626;transform:scaleX(0.998);transform-origin:0 0">Статистичні методи аналізу</div><div class="a" style="left:0;top:136.80px;width:41px;height:11.4px;background:#4472c4"></div><div class="a" style="left:42px;top:136.80px;width:236.3px;height:11.4px;background:#cfd5ea"></div><div class="t" style="left:7.8px;top:138.40px;font-family:'Liberation Serif',serif;font-size:7.4px;color:#fff;transform:scaleX(0.9);transform-origin:0 0">ЗУК 1.25</div><div class="t" style="left:42.5px;top:138.80px;font-family:'Liberation Serif',serif;font-size:7.8px;color:#262626;transform:scaleX(1.003);transform-origin:0 0">&nbsp;Екологічна безпека</div><div class="a" style="left:0;top:149.28px;width:41px;height:11.4px;background:#4472c4"></div><div class="a" style="left:42px;top:149.28px;width:236.3px;height:11.4px;background:#e9ebf5"></div><div class="t" style="left:7.8px;top:150.88px;font-family:'Liberation Serif',serif;font-size:7.4px;color:#fff;transform:scaleX(0.9);transform-origin:0 0">ЗУК 1.26</div><div class="t" style="left:42.5px;top:151.28px;font-family:'Liberation Serif',serif;font-size:7.8px;color:#262626;transform:scaleX(1.002);transform-origin:0 0">Фізіологія людини</div><div class="a" style="left:0;top:161.76px;width:41px;height:11.4px;background:#4472c4"></div><div class="a" style="left:42px;top:161.76px;width:236.3px;height:11.4px;background:#cfd5ea"></div><div class="t" style="left:7.8px;top:163.36px;font-family:'Liberation Serif',serif;font-size:7.4px;color:#fff;transform:scaleX(0.9);transform-origin:0 0">ЗУК 1.28</div><div class="t" style="left:42.5px;top:163.76px;font-family:'Liberation Serif',serif;font-size:7.8px;color:#262626;transform:scaleX(1.018);transform-origin:0 0">Вступ до аюрведи</div></div>
</div>



<svg class="a" style="left:377px;top:389.5px" width="29" height="3" viewBox="0 0 29 3"><path d="M0 1.5 Q1.5 0 3 1.5 T6 1.5 T9 1.5 T12 1.5 T15 1.5 T18 1.5 T21 1.5 T24 1.5 T27 1.5 T30 1.5" stroke="#e66" stroke-width="0.5" fill="none"/></svg>
<!-- BOTTOM TOOLBAR -->

<div class="a" style="left:1px;top:402px;width:798px;height:27px;background:#1a1a1a"></div>
<!-- mic -->
<svg class="a" style="left:25px;top:404px" width="12" height="14" viewBox="0 0 12 14"><rect x="4" y="1" width="4" height="8" rx="2" fill="#bdbdbd"/><path d="M2.2 6.5 C2.2 9.5 4 10.8 6 10.8 C8 10.8 9.8 9.5 9.8 6.5 M6 10.8 V13.2 M4 13.3 H8" stroke="#bdbdbd" stroke-width="0.9" fill="none"/></svg>
<svg class="a" style="left:50px;top:409px" width="6" height="4"><path d="M1 3 L3 1 L5 3" stroke="#aaa" stroke-width="0.8" fill="none"/></svg>
<div class="t" style="left:7px;top:421px;font-size:6.5px;color:#c8c8c8;transform:scaleX(1.010);transform-origin:0 0">Выключить звук</div>
<!-- video -->
<svg class="a" style="left:83px;top:406px" width="16" height="11" viewBox="0 0 16 11"><rect x="1" y="1.5" width="9.5" height="8" rx="1.5" fill="#bdbdbd"/><path d="M11 4.5 L14.5 2 V9 L11 6.5 Z" fill="#bdbdbd"/></svg>
<svg class="a" style="left:112px;top:409px" width="6" height="4"><path d="M1 3 L3 1 L5 3" stroke="#aaa" stroke-width="0.8" fill="none"/></svg>
<div class="t" style="left:63px;top:421px;font-size:6.3px;color:#c8c8c8;transform:scaleX(1.006);transform-origin:0 0">Остановить видео</div>
<!-- participants -->
<svg class="a" style="left:245px;top:405px" width="15" height="11" viewBox="0 0 15 11"><circle cx="5" cy="3" r="2.3" fill="#bdbdbd"/><path d="M0.5 10.5 C0.5 7 2.5 6 5 6 C7.5 6 9.5 7 9.5 10.5 Z" fill="#bdbdbd"/><circle cx="10.5" cy="3.8" r="2" fill="#bdbdbd"/><path d="M10 6.8 C12.5 6.5 14.5 7.5 14.5 10.5 H10.5 C10.5 9 10.3 7.8 10 6.8Z" fill="#bdbdbd"/></svg>
<div class="t" style="left:261px;top:407.5px;font-size:6.6px;color:#aaa">79</div>
<svg class="a" style="left:277px;top:409px" width="6" height="4"><path d="M1 3 L3 1 L5 3" stroke="#aaa" stroke-width="0.8" fill="none"/></svg>
<div class="t" style="left:236px;top:421px;font-size:6.6px;color:#c8c8c8;transform:scaleX(1.015);transform-origin:0 0">Участники</div>
<!-- chat -->
<svg class="a" style="left:303px;top:405px" width="14" height="12" viewBox="0 0 14 12"><path d="M1.5 1 H12.5 V8 H6 L3.5 11 V8 H1.5 Z" fill="#bdbdbd" stroke="#bdbdbd" stroke-width="0.8" stroke-linejoin="round"/></svg>
<svg class="a" style="left:324px;top:409px" width="6" height="4"><path d="M1 3 L3 1 L5 3" stroke="#aaa" stroke-width="0.8" fill="none"/></svg>
<div class="t" style="left:304px;top:421px;font-size:6.4px;color:#c8c8c8;transform:scaleX(0.943);transform-origin:0 0">Чат</div>
<!-- share -->
<div class="a" style="left:363px;top:406px;width:13px;height:10px;border-radius:1.5px;background:#22c74f"></div>
<svg class="a" style="left:366px;top:407px" width="7" height="8" viewBox="0 0 7 8"><path d="M3.5 1 L6 3.8 H4.3 V7 H2.7 V3.8 H1 Z" fill="#111"/></svg>
<div class="t" style="left:337px;top:421px;font-size:6.4px;color:#23c552;transform:scaleX(1.004);transform-origin:0 0">Демонстрация экрана</div>
<!-- record -->
<div class="a" style="left:422px;top:405.5px;width:11px;height:11px;border-radius:50%;border:1.2px solid #bdbdbd;background:radial-gradient(circle,#bdbdbd 0 3.5px,#1a1a1a 3.8px)"></div>
<div class="t" style="left:417px;top:421px;font-size:6.4px;color:#c8c8c8;transform:scaleX(1.096);transform-origin:0 0">Запись</div>
<!-- cc -->
<div class="a" style="left:498px;top:406.5px;width:12.5px;height:9px;border-radius:1.5px;background:#bdbdbd"></div>
<div class="t" style="left:500px;top:408px;font-size:5px;font-weight:bold;color:#1a1a1a">cc</div>
<div class="t" style="left:452px;top:421px;font-size:6.35px;color:#c8c8c8;transform:scaleX(0.996);transform-origin:0 0">Расшифровка в реальном времени</div>
<!-- reactions -->
<svg class="a" style="left:573px;top:404px" width="14" height="13" viewBox="0 0 14 13"><circle cx="6.5" cy="7" r="5" fill="#bdbdbd"/><circle cx="4.8" cy="6" r="0.7" fill="#1a1a1a"/><circle cx="8.2" cy="6" r="0.7" fill="#1a1a1a"/><path d="M4 8.3 C5 10 8 10 9 8.3" stroke="#1a1a1a" stroke-width="0.8" fill="none"/><path d="M11.5 0.5 V3.5 M10 2 H13" stroke="#bdbdbd" stroke-width="0.9"/></svg>
<div class="t" style="left:569px;top:421px;font-size:6.4px;color:#c8c8c8;transform:scaleX(0.982);transform-origin:0 0">Реакции</div>
<!-- apps -->
<svg class="a" style="left:620px;top:405.5px" width="11" height="11" viewBox="0 0 11 11" stroke="#bdbdbd" stroke-width="1" fill="none"><path d="M1 4 V2.5 C1 1.6 1.6 1 2.5 1 H4 M10 7 V8.5 C10 9.4 9.4 10 8.5 10 H7 M1 7 V8.5 C1 9.4 1.6 10 2.5 10 H4"/><circle cx="8.5" cy="2.5" r="1.4" fill="#bdbdbd" stroke="none"/></svg>
<div class="t" style="left:606px;top:421px;font-size:6.4px;color:#c8c8c8;transform:scaleX(1.016);transform-origin:0 0">Приложения</div>
<!-- leave -->
<div class="a" style="left:760px;top:409px;width:32px;height:13.5px;border-radius:3px;background:#c9292b"></div>
<div class="t" style="left:767px;top:412.5px;font-size:6.3px;font-weight:bold;color:#fff">Выйти</div>
<!-- windows activation watermark -->
<div class="t" style="left:591px;top:378.3px;font-size:10.3px;color:rgba(140,140,140,.65);transform:scaleX(1.001);transform-origin:0 0">Активация Windows</div>
<div class="t" style="left:591px;top:391.5px;font-size:7.4px;color:rgba(140,140,140,.65);transform:scaleX(0.997);transform-origin:0 0">Чтобы активировать Windows, перейдите в раздел</div>
<div class="t" style="left:591px;top:400.8px;font-size:7.4px;color:rgba(140,140,140,.65);transform:scaleX(1.006);transform-origin:0 0">"Параметры".</div>


</body></html>
